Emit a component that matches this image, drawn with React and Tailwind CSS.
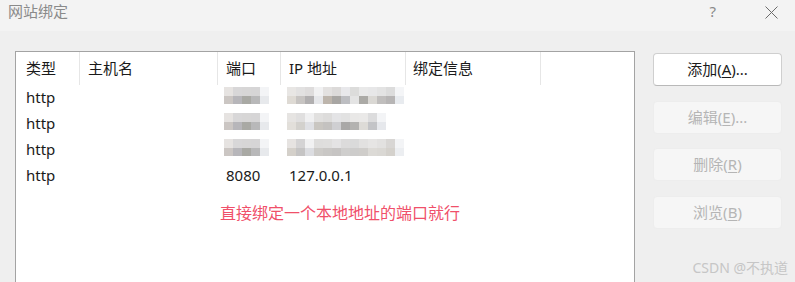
import React from "react";

const portBlur = [
    ["bg-[#e6e3e1]", "bg-[#d8d7d8]", "bg-[#d7d6d6]", "bg-[#d6d5d6]", "bg-[#f3f4f6]"],
    ["bg-[#cbc6c3]", "bg-[#b7b6ba]", "bg-[#a9a9a4]", "bg-[#b8b8b9]", "bg-[#e7e9ec]"],
];

const ipBlurs = [
    [
        ["bg-[#e8e6e4]", "bg-[#e2e1e1]", "bg-[#dedcdc]", "bg-[#f1f1f2]", "bg-[#e3e1e0]", "bg-[#dcdad9]", "bg-[#e8e8eb]", "bg-[#dcdcdb]", "bg-[#e9e9e9]", "bg-[#e7e7e8]", "bg-[#e3e3e3]", "bg-[#dcdcdc]", "bg-[#f4f5f7]"],
        ["bg-[#dedad4]", "bg-[#c7c4c2]", "bg-[#b1afb0]", "bg-[#e6e7ea]", "bg-[#bdb5ac]", "bg-[#a8a6a3]", "bg-[#bdbec2]", "bg-[#e4e4e4]", "bg-[#abaaa6]", "bg-[#dad8d4]", "bg-[#c0bebd]", "bg-[#b7b5b5]", "bg-[#e8ebef]"],
    ],
    [
        ["bg-[#e6e4e2]", "bg-[#e0dfdf]", "bg-[#f0f0f1]", "bg-[#e1e0df]", "bg-[#dddcdb]", "bg-[#e4e4e6]", "bg-[#e2e2e2]", "bg-[#e9e8e7]", "bg-[#eae9e8]", "bg-[#dcdcdd]", "bg-[#f3f4f6]", "bg-white", "bg-white"],
        ["bg-[#e2dfda]", "bg-[#d3d1cd]", "bg-[#dfe0e4]", "bg-[#c9c6c1]", "bg-[#c4c2c0]", "bg-[#cfcfd2]", "bg-[#a9a8a7]", "bg-[#b3b2b0]", "bg-[#dddbd7]", "bg-[#c3c4c7]", "bg-[#e6e8ec]", "bg-white", "bg-white"],
    ],
    [
        ["bg-[#e6e3e1]", "bg-[#d4d3d4]", "bg-[#f1f1f2]", "bg-[#dedddc]", "bg-[#dfdedd]", "bg-[#e4e3e4]", "bg-[#dcdbdb]", "bg-[#dadada]", "bg-[#e2e1e0]", "bg-[#e6e5e4]", "bg-[#e2e1e0]", "bg-[#d8d6d4]", "bg-[#f3f4f6]"],
        ["bg-[#d4d0ca]", "bg-[#c5c4c4]", "bg-[#dcdde1]", "bg-[#cdcbc8]", "bg-[#c9c7c5]", "bg-[#c6c4c3]", "bg-[#cfcecd]", "bg-[#cdcccb]", "bg-[#cfcdca]", "bg-[#dcdad6]", "bg-[#dad8d4]", "bg-[#d4d1cc]", "bg-[#eceef1]"],
    ],
];

const Mosaic = ({ rows }) => (
    <div className="flex flex-col">
        {rows.map((row, i) => (
            <div key={i} className="flex">
                {row.map((c, j) => (
                    <div key={j} className={`w-[9px] h-[8.5px] ${c}`} />
                ))}
            </div>
        ))}
    </div>
);

const columns = [
    { label: "类型", w: "w-[64px]", pl: "pl-[10px]" },
    { label: "主机名", w: "w-[138px]", pl: "pl-[8px]" },
    { label: "端口", w: "w-[63px]", pl: "pl-[8px]" },
    { label: "IP 地址", w: "w-[125px]", pl: "pl-[8px]" },
    { label: "绑定信息", w: "w-[135px]", pl: "pl-[7px]" },
];

const Btn = ({ label, hot, tail = "", enabled }) => (
    <div
        className={`h-[33px] rounded-[4px] flex items-center justify-center text-[15px] leading-none ${enabled
            ? "bg-white border border-[#cfcfcf] border-b-[#b9b9b9] text-[#1b1b1b]"
            : "bg-[#f6f6f6] border border-[#ededed] text-[#b5b5b5]"
            }`}
    >
        <span>
            {label}(<span className="underline underline-offset-2">{hot}</span>){tail}
        </span>
    </div>
);

export default function App() {
    return (
        <div className="w-[795px] h-[282px] overflow-hidden flex flex-col bg-[#efefef] font-['Noto_Sans','Noto_Sans_CJK_SC',sans-serif] relative">
            <div className="h-[31px] shrink-0 bg-[#f3f3f3] flex items-start">
                <div className="pl-[8px] pt-[1px] text-[15px] leading-[20px] text-[#8a8a8a]">网站绑定</div>
                <div className="ml-auto flex items-start">
                    <div className="pt-[1px] text-[15px] leading-[20px] text-[#8a8a8a] mr-[49px]">?</div>
                    <svg className="mt-[6px] mr-[17px] w-[13px] h-[13px]" viewBox="0 0 13 13" fill="none" stroke="#6b6b6b" strokeWidth="1">
                        <path d="M0.5 0.5 L12.5 12.5 M12.5 0.5 L0.5 12.5" />
                    </svg>
                </div>
            </div>

            <div className="flex flex-1 pl-[15px] pt-[20px]">
                <div className="w-[620px] h-[260px] shrink-0 bg-white border border-[#a3a3a3] flex flex-col">
                    <div className="flex h-[33px] shrink-0 text-[15px] text-[#1a1a1a]">
                        {columns.map((c) => (
                            <div key={c.label} className={`${c.w} ${c.pl} h-full flex items-center border-r border-[#e6e6e6]`}>
                                <span className="leading-none">{c.label}</span>
                            </div>
                        ))}
                    </div>

                    {[0, 1, 2].map((i) => (
                        <div key={i} className="flex h-[26px] text-[15px] text-[#1a1a1a]">
                            <div className="w-[202px] pl-[10px] pb-[2px] flex items-center">http</div>
                            <div className="w-[63px] pl-[6px] pt-[2px]">
                                <Mosaic rows={portBlur} />
                            </div>
                            <div className="pl-[6px] pt-[2px]">
                                <Mosaic rows={ipBlurs[i]} />
                            </div>
                        </div>
                    ))}
                    <div className="flex h-[26px] pb-[2px] text-[15px] text-[#1a1a1a]">
                        <div className="w-[202px] pl-[10px] flex items-center">http</div>
                        <div className="w-[63px] pl-[8px] flex items-center">8080</div>
                        <div className="pl-[8px] flex items-center">127.0.0.1</div>
                    </div>

                    <div className="pl-[204px] mt-[14px] text-[16px] leading-[20px] text-[#f0506a]">
                        直接绑定一个本地地址的端口就行
                    </div>
                </div>

                <div className="w-[129px] ml-[18px] pt-[2px] flex flex-col gap-[14.5px]">
                    <Btn label="添加" hot="A" tail="..." enabled />
                    <Btn label="编辑" hot="E" tail="..." />
                    <Btn label="删除" hot="R" />
                    <Btn label="浏览" hot="B" />
                </div>
            </div>

            <div className="absolute right-[7px] bottom-[6px] text-[14px] leading-[16px] text-[#c6c6c6]">CSDN @不执道</div>
        </div>
    );
}
